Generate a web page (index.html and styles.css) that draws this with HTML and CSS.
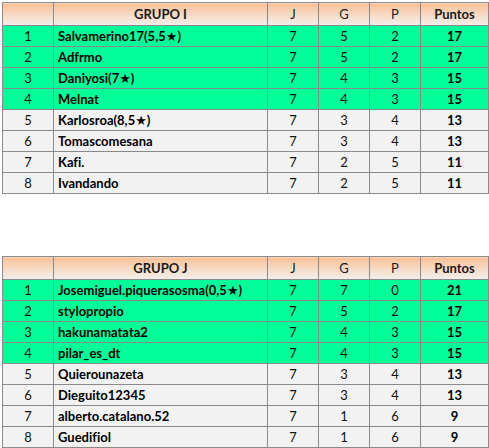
FILE: index.html
```html
<!DOCTYPE html>
<html>
<head>
<meta charset="utf-8">
<link rel="stylesheet" href="styles.css">
</head>
<body>
<div class="page">
<table class="grp">
  <colgroup><col class="c-pos"><col class="c-name"><col class="c-n"><col class="c-n"><col class="c-n"><col class="c-pts"></colgroup>
  <thead><tr><th></th><th class="b">GRUPO I</th><th>J</th><th>G</th><th>P</th><th class="b">Puntos</th></tr></thead>
  <tbody>
    <tr class="up"><td>1</td><td class="name">Salvamerino17(5,5★)</td><td>7</td><td>5</td><td>2</td><td class="pts">17</td></tr>
    <tr class="up"><td>2</td><td class="name">Adfrmo</td><td>7</td><td>5</td><td>2</td><td class="pts">17</td></tr>
    <tr class="up"><td>3</td><td class="name">Daniyosi(7★)</td><td>7</td><td>4</td><td>3</td><td class="pts">15</td></tr>
    <tr class="up"><td>4</td><td class="name">Melnat</td><td>7</td><td>4</td><td>3</td><td class="pts">15</td></tr>
    <tr><td>5</td><td class="name">Karlosroa(8,5★)</td><td>7</td><td>3</td><td>4</td><td class="pts">13</td></tr>
    <tr><td>6</td><td class="name">Tomascomesana</td><td>7</td><td>3</td><td>4</td><td class="pts">13</td></tr>
    <tr><td>7</td><td class="name">Kafi.</td><td>7</td><td>2</td><td>5</td><td class="pts">11</td></tr>
    <tr><td>8</td><td class="name">Ivandando</td><td>7</td><td>2</td><td>5</td><td class="pts">11</td></tr>
  </tbody>
</table>
<table class="grp">
  <colgroup><col class="c-pos"><col class="c-name"><col class="c-n"><col class="c-n"><col class="c-n"><col class="c-pts"></colgroup>
  <thead><tr><th></th><th class="b">GRUPO J</th><th>J</th><th>G</th><th>P</th><th class="b">Puntos</th></tr></thead>
  <tbody>
    <tr class="up"><td>1</td><td class="name">Josemiguel.piquerasosma(0,5★)</td><td>7</td><td>7</td><td>0</td><td class="pts">21</td></tr>
    <tr class="up"><td>2</td><td class="name">stylopropio</td><td>7</td><td>5</td><td>2</td><td class="pts">17</td></tr>
    <tr class="up"><td>3</td><td class="name">hakunamatata2</td><td>7</td><td>4</td><td>3</td><td class="pts">15</td></tr>
    <tr class="up"><td>4</td><td class="name">pilar_es_dt</td><td>7</td><td>4</td><td>3</td><td class="pts">15</td></tr>
    <tr><td>5</td><td class="name">Quierounazeta</td><td>7</td><td>3</td><td>4</td><td class="pts">13</td></tr>
    <tr><td>6</td><td class="name">Dieguito12345</td><td>7</td><td>3</td><td>4</td><td class="pts">13</td></tr>
    <tr><td>7</td><td class="name">alberto.catalano.52</td><td>7</td><td>1</td><td>6</td><td class="pts">9</td></tr>
    <tr><td>8</td><td class="name">Guedifiol</td><td>7</td><td>1</td><td>6</td><td class="pts">9</td></tr>
  </tbody>
</table>
</div>
</body>
</html>
```
FILE: styles.css
```css
html, body { margin: 0; padding: 0; background: #ffffff; }
.page {
  padding: 2px 0 0 2px;
  display: flex;
  flex-direction: column;
  gap: 62px;
  font-family: Lato, "Liberation Sans", "DejaVu Sans", sans-serif;
  font-size: 13px;
  font-variant-ligatures: none;
  color: #111;
}
.grp {
  border-collapse: collapse;
  table-layout: fixed;
  width: 486px;
}
.c-pos { width: 51px; }
.c-name { width: 214px; }
.c-n { width: 51px; }
.c-pts { width: 68px; }
.grp th, .grp td {
  border: 1px solid #8a8a8a;
  padding: 0;
  text-align: center;
  white-space: nowrap;
  overflow: hidden;
}
.grp th {
  height: 22px;
  font-weight: normal;
  color: #1a1a1a;
  background: linear-gradient(to bottom, #f9bf94 0%, #f6dcc8 55%, #f3efec 100%);
}
.grp th.b { font-weight: bold; }
.grp td {
  height: 20px;
  background: #f2f2f2;
}
.grp tr.up td { background: #00ff99; }
.grp td.name {
  text-align: left;
  padding-left: 4px;
  font-weight: bold;
  color: #000;
}
.grp td.pts { font-weight: bold; color: #000; }
```
